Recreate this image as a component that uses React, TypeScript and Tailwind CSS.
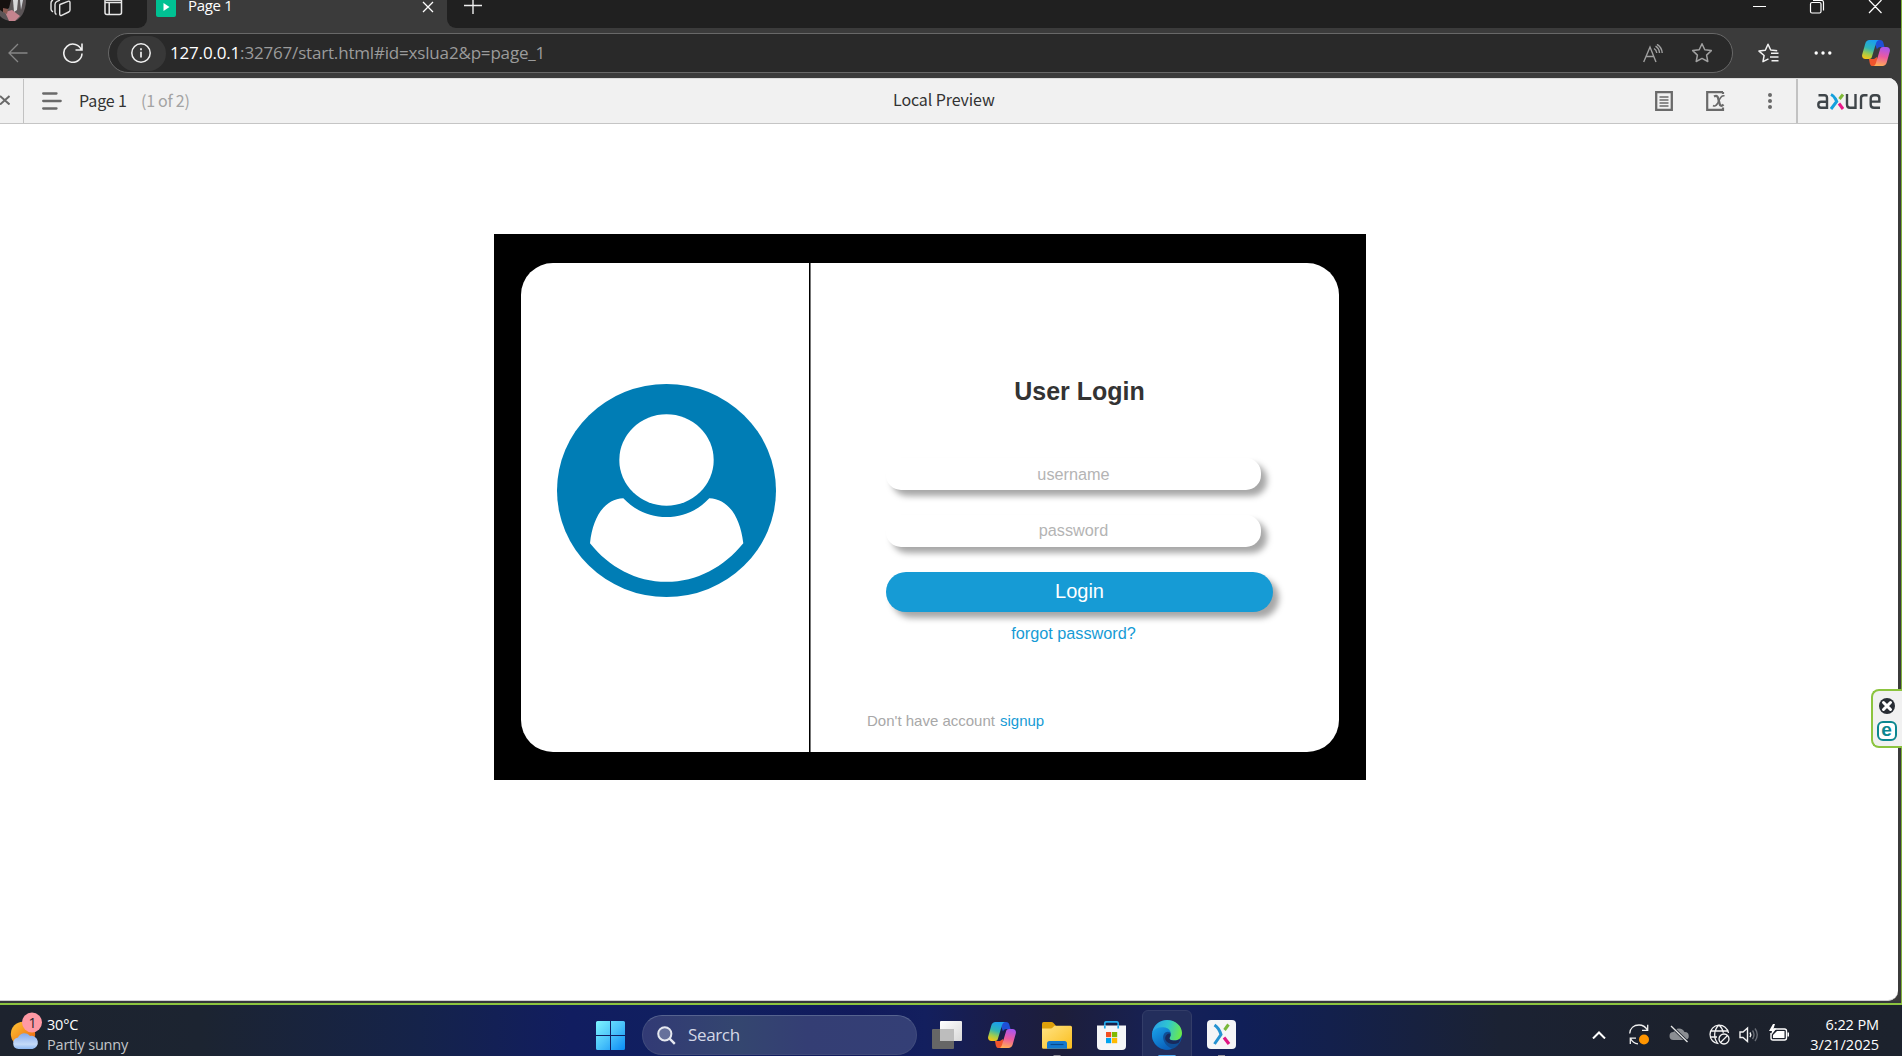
import React from "react";

const segoe = "font-['Open_Sans','Noto_Sans',sans-serif]";
const source = "font-['Noto_Sans_CJK_SC',sans-serif]";

function Copilot({ id, className }: { id: string; className: string }) {
  return (
    <svg viewBox="0 0 28 26" className={className} fill="none">
      <defs>
        <linearGradient id={id + "a"} x1="0.6" y1="0" x2="0.3" y2="1">
          <stop offset="0" stopColor="#1a9df0" />
          <stop offset="0.45" stopColor="#2fb5b5" />
          <stop offset="0.75" stopColor="#a3cc4b" />
          <stop offset="1" stopColor="#f5c518" />
        </linearGradient>
        <linearGradient id={id + "b"} x1="0.6" y1="0" x2="0.4" y2="1">
          <stop offset="0" stopColor="#a855f0" />
          <stop offset="0.5" stopColor="#ec5aa0" />
          <stop offset="1" stopColor="#ffae55" />
        </linearGradient>
      </defs>
      <path d="M14 0h4c2 0 2.800 1 3.300 2.600L22.500 7h-4c-2 0-3 1-3.500 2.500L13 4z" fill="#1f4fd6" />
      <path d="M7 19h5l3-2 1 5-1.500 4H11c-2 0-2.700-1-3.200-2.600z" fill="#f0552d" />
      <path d="M7.500 0H17c-1.800.3-2.500 1.700-3 3.300L10 16.500C9.500 18.300 8.500 19 7 19H3.500C.8 19-.4 17 .2 14.500L3.300 3.500C3.900 1.400 5.400 0 7.500 0z" fill={"url(#" + id + "a)"} />
      <path d="M20.500 26H11c1.800-.3 2.500-1.700 3-3.300L18 9.500C18.500 7.700 19.500 7 21 7h3.500c2.700 0 3.900 2 3.300 4.500l-3.100 11c-.6 2.100-2.100 3.500-4.200 3.500z" fill={"url(#" + id + "b)"} />
    </svg>
  );
}

function TitleBar() {
  return (
    <div className="flex h-[28px] items-start overflow-hidden bg-[#202020]">
      <div className="flex h-[28px] w-[147px] items-start rounded-br-[9px]">
        <svg viewBox="0 0 26 22" className="h-[22px] w-[26px]">
          <path d="M0 0h26a13 21 0 0 1-13 21Q4 21 0 16z" fill="#5b5557" />
          <path d="M0 0h11l-2 8-6 4-3-2z" fill="#15110f" />
          <path d="M13 0h5l-1 10-3 2z" fill="#d8d8da" />
          <path d="M20 0h3l-2 10z" fill="#cfd2d6" />
          <path d="M5 12l7-2 8 6-5 5H9z" fill="#c4848e" />
          <path d="M3 8l5 1-1 5-4-2z" fill="#8a5a50" />
        </svg>
        <svg viewBox="0 0 22 17" className="ml-[24px] h-[17px] w-[22px]" fill="none" stroke="#e4e4e4" strokeWidth="1.400">
          <path d="M10 4.500l8-3.200c1.200-.4 2 .2 2 1.200v7.500c0 1-.4 1.600-1.300 2l-7 3.300c-1.200.5-2 0-2-1.200V6c0-.8.100-1.200.3-1.500zM6.500 14.500C5.500 14 5 13.500 5 12.300V4.500C5 3 5.500 2 7 1.400L10 .2M3 11.800C1.500 11 1 10.500 1 9.300V3C1 1.500 1.500.6 3 0" />
        </svg>
        <svg viewBox="0 0 19 16" className="ml-[32px] h-[16px] w-[19px]" fill="none" stroke="#e8e8e8" strokeWidth="1.500">
          <path d="M1 -2V12.500a2 2 0 0 0 2 2H15.500a2 2 0 0 0 2-2V-2M1 2.500H17.500M5.200 2.500V14.500" />
          <path d="M1.500 0H17" strokeWidth="1.800" />
        </svg>
      </div>
      <div className="-ml-[9px] flex h-[28px] w-[9px] bg-[#3b3b3b]">
        <div className="h-[28px] w-[9px] rounded-br-[9px] bg-[#202020]" />
      </div>
      <div className="flex h-[28px] w-[300px] items-start bg-[#3b3b3b]">
        <svg viewBox="0 0 20 17" className="ml-[9px] h-[17px] w-[20px]">
          <path d="M0 0H20V15a2 2 0 0 1-2 2H2a2 2 0 0 1-2-2z" fill="#00c193" />
          <path d="M7.500 3v8l6-4z" fill="#fff" />
        </svg>
        <div className={segoe + " ml-[12px] w-[60px] whitespace-nowrap text-[15px] leading-[11px] tracking-[-0.300px] text-white"}>Page 1</div>
        <svg viewBox="0 0 12 12" className="ml-[174px] mt-[1px] h-[12px] w-[12px]" stroke="#fff" strokeWidth="1.300">
          <path d="M1 1l10 10M11 1L1 11" />
        </svg>
      </div>
      <div className="flex h-[28px] w-[9px] bg-[#3b3b3b]">
        <div className="h-[28px] w-[9px] rounded-bl-[9px] bg-[#202020]" />
      </div>
      <svg viewBox="0 0 18 15" className="ml-[8px] h-[15px] w-[18px]" stroke="#eee" strokeWidth="1.400">
        <path d="M0 5.500H18M9 -3V14" />
      </svg>
      <div className="flex-1" />
      <svg viewBox="0 0 129 14" className="mr-[19px] h-[14px] w-[129px]" fill="none" stroke="#fff" strokeWidth="1.200">
        <path d="M0 6.500H13M57.500 4a1.500 1.500 0 0 1 1.500-1.500h7.500A1.500 1.500 0 0 1 68 4v7.500a1.500 1.500 0 0 1-1.500 1.500H59a1.500 1.500 0 0 1-1.500-1.500zM60 .5h8.500A2 2 0 0 1 70.500 2.500V10.500M116 0l12.500 13M128.500 0L116 13" />
      </svg>
    </div>
  );
}

function AddressBar() {
  return (
    <div className="flex h-[50px] items-center bg-[#3b3b3b]">
      <svg viewBox="0 0 20 20" className="ml-[8px] h-[20px] w-[20px]" fill="none" stroke="#868686" strokeWidth="1.300">
        <path d="M19.500 10H1M10 1L1 10l9 9" />
      </svg>
      <svg viewBox="0 0 20 20" className="ml-[35px] h-[20px] w-[20px]" fill="none" stroke="#f0f0f0" strokeWidth="1.600">
        <path d="M18.600 7.500A9.100 9.100 0 1 0 19 10.500M19 .5V7H12.500" />
      </svg>
      <div className="ml-[25px] flex h-[40px] w-[1625px] items-center rounded-full border border-[#686868] bg-[#292929]">
        <div className="ml-[8px] flex h-[35px] w-[49px] items-center justify-center rounded-full bg-[#383838] pr-px">
          <svg viewBox="0 0 20 20" className="h-[20px] w-[20px]" fill="none" stroke="#f0f0f0" strokeWidth="1.500">
            <circle cx="10" cy="10" r="9.200" />
            <path d="M10 8.800V14.500M10 5.300V7.200" strokeWidth="1.700" />
          </svg>
        </div>
        <div className={segoe + " ml-[4px] w-[400px] whitespace-nowrap text-[17px] tracking-[-0.180px] text-[#9b9b9b]"}>
          <span className="text-white">127.0.0.1</span>:32767/start.html#id=xslua2&amp;p=page_1
        </div>
        <div className="flex-1" />
        <svg viewBox="0 0 20 19" className="h-[19px] w-[20px]" fill="none" stroke="#a0a0a0" strokeWidth="1.400">
          <path d="M.7 18L7 3l6 15M3 12.500h8M11 4.500c1.700 1 2.600 2.400 2.800 4.500M12.500 2.200c2.500 1.500 3.800 3.500 4 6.800M14 .3c3.200 2 5 4.500 5.200 8.700" />
        </svg>
        <svg viewBox="0 0 24 24" className="ml-[27px] mr-[18px] h-[24px] w-[24px]" fill="none" stroke="#a0a0a0" strokeWidth="1.500" strokeLinejoin="round">
          <path d="M12 2.800l2.800 5.900 6.500.9-4.700 4.500 1.200 6.400L12 17.400l-5.800 3.100 1.200-6.400L2.700 9.600l6.500-.9z" />
        </svg>
      </div>
      <svg viewBox="0 0 22 20" className="ml-[25px] h-[20px] w-[22px]" fill="none" stroke="#f2f2f2" strokeWidth="1.500" strokeLinejoin="round">
        <path d="M10.500 15.800L5 18.700l1.100-6.200L1 8.100l6.300-.9L10 1.200l2.700 5.800 6.500.8M13 10.200H20.500M12 14H20.500M13.500 17.700H20.500" />
      </svg>
      <svg viewBox="0 0 18 4" className="ml-[34px] h-[4px] w-[18px]" fill="#fff">
        <circle cx="2.200" cy="2" r="1.700" /><circle cx="9" cy="2" r="1.700" /><circle cx="15.800" cy="2" r="1.700" />
      </svg>
      <Copilot id="top" className="ml-[30px] h-[26px] w-[28px]" />
    </div>
  );
}

function AxureLogo() {
  return (
    <svg viewBox="0 0 64 17" className="h-[17px] w-[64px]" fill="none" stroke="#3f4549" strokeWidth="2.400">
      <path d="M1.500 2.200H7.500Q10 2.200 10 4.800V14.800H4Q1.300 14.800 1.300 11.800T4 8.800H10" />
      <path d="M14 1.500Q17 3 18.500 6L19.700 8.500 14 16" stroke="#14a0dc" strokeWidth="3" />
      <path d="M26 1.500L22.500 6" stroke="#7fb935" strokeWidth="3" />
      <path d="M22 10.500L26 16" stroke="#ea1688" strokeWidth="3" />
      <path d="M30 1V11.500Q30 14.800 33 14.800H38.500V1M44 16V5Q44 2.200 47 2.200H50.500M63 14.800H57Q53.700 14.800 53.700 11.500V5.500Q53.700 2.200 57 2.200H59.500Q62.300 2.200 62.300 5V8.600H54" />
    </svg>
  );
}

function PreviewBar() {
  return (
    <div className={source + " flex h-[46px] items-center border-b border-t border-b-[#c5c5c5] border-t-[#dcdcdc] bg-[#f1f1f1]"}>
      <div className="flex h-full w-[24px] items-center border-r border-[#c2c2c2]">
        <svg viewBox="0 0 10 10" className="mb-[2px] h-[10px] w-[10px]" stroke="#6a6a6a" strokeWidth="2"><path d="M0 1l9.500 8.500M9.500 1L0 9.500" /></svg>
      </div>
      <svg viewBox="0 0 20 18" className="ml-[18px] h-[18px] w-[20px]" stroke="#6a6a6a" strokeWidth="2.300" strokeLinecap="round">
        <path d="M1.200 1.500H14.500M1.200 9H18.700M1.200 16.500H14.500" />
      </svg>
      <div className="ml-[17px] w-[62px] whitespace-nowrap pb-[2px] text-[16px] leading-[24px] tracking-[-0.100px] text-[#333]">Page 1</div>
      <div className="w-[60px] whitespace-nowrap pb-[2px] text-[16px] leading-[24px] tracking-[-0.250px] text-[#a3a3a3]">(1 of 2)</div>
      <div className="ml-[692px] w-[120px] whitespace-nowrap pb-[4px] text-[16px] leading-[24px] tracking-[-0.100px] text-[#333]">Local Preview</div>
      <div className="flex-1" />
      <svg viewBox="0 0 18 20" className="h-[20px] w-[18px]" fill="none" stroke="#6a6a6a">
        <path d="M1.200 1.200H16.800V18.800H1.200z" strokeWidth="2.300" />
        <path d="M4.500 6H13.500M4.500 9H13.500M4.500 12H13.500M4.500 15H13.500" strokeWidth="1.700" />
      </svg>
      <svg viewBox="0 0 20 20" className="ml-[33px] h-[20px] w-[20px]" fill="none" stroke="#6a6a6a">
        <path d="M17 1.200H1.200V18.800H17V16.500M17 1V3" strokeWidth="2.200" />
        <path d="M8 5.500c3-1.500 4 0 4.500 3l1 4c.5 2.500 2 3 4 1" strokeWidth="2.400" />
        <path d="M18.500 5c-2-1-3.500.5-5 3.500l-2 4C10 15 8.500 15.500 7 14.500" strokeWidth="1.600" />
      </svg>
      <svg viewBox="0 0 4 16" className="ml-[42px] h-[16px] w-[4px]" fill="#6a6a6a">
        <circle cx="2" cy="2" r="2" /><circle cx="2" cy="8" r="2" /><circle cx="2" cy="14" r="2" />
      </svg>
      <div className="ml-[24px] flex h-full w-[102px] items-center border-l-2 border-[#c2c2c2] pl-[19px]"><AxureLogo /></div>
    </div>
  );
}

function LoginCard() {
  return (
    <div className="ml-[494px] h-[546px] w-[872px] bg-black px-[27px] pt-[29px]">
      <div className="flex h-[489px] w-[818px] overflow-hidden rounded-[32px] bg-white font-['Liberation_Sans',Arial,sans-serif]">
        <div className="w-[290px] border-r border-[#777] pl-[36px] pt-[121px] shadow-[inset_-1px_0_0_#000]">
          <svg viewBox="557 384 219 213" className="h-[213px] w-[219px]">
            <ellipse cx="666.500" cy="490.500" rx="109.500" ry="106.500" fill="#007db5" />
            <ellipse cx="666.500" cy="460" rx="47.200" ry="45.700" fill="#fff" />
            <path d="M623.300 498.200C605 499 593 516 590 543.200C609 567 636 581.800 666.500 581.800S724 567 743.300 543.200C740 516 728 499 709.300 498.200C697 511 683 517.100 666.500 517.100S636 511 623.300 498.200z" fill="#fff" />
          </svg>
        </div>
        <div className="flex flex-1 flex-col pl-[75px]">
          <h1 className="mt-[113px] h-[30px] w-[387px] text-center text-[25px] font-bold leading-[30px] text-[#333]">User Login</h1>
          <div className="mt-[52px] h-[32px] w-[375px] rounded-[15px] bg-white text-center text-[16.250px] leading-[32px] text-[#b4b4b4] shadow-[6px_6px_6px_rgba(0,0,0,0.350)]">username</div>
          <div className="mt-[25px] h-[32px] w-[375px] rounded-[15px] bg-white text-center text-[16.250px] leading-[31px] text-[#b4b4b4] shadow-[6px_6px_6px_rgba(0,0,0,0.350)]">password</div>
          <button className="mt-[25px] h-[40px] w-[387px] rounded-full bg-[#169bd5] pb-[2px] text-center text-[20px] leading-[36px] text-white shadow-[6px_6px_6px_rgba(0,0,0,0.350)]">Login</button>
          <a className="mt-[11px] h-[20px] w-[375px] text-center text-[16.250px] leading-[20px] text-[#169bd5]">forgot password?</a>
          <div className="-ml-[19px] mt-[68px] flex text-[15px] leading-[20px]">
            <span className="w-[133px] whitespace-nowrap text-[#a8a8a8]">Don't have account</span>
            <a className="text-[#169bd5]">signup</a>
          </div>
        </div>
      </div>
    </div>
  );
}

function SideWidget() {
  return (
    <div className="absolute right-0 top-[689px] flex h-[59px] w-[31px] flex-col items-center rounded-l-[8px] border-2 border-r-0 border-[#8cc43f] bg-[#f1f1f1] pr-[2px] pt-[7px]">
      <svg viewBox="0 0 16 16" className="h-[16px] w-[16px]">
        <circle cx="8" cy="8" r="8" fill="#282d34" />
        <path d="M4.500 4.500l7 7M11.500 4.500l-7 7" stroke="#fff" strokeWidth="3" strokeLinecap="round" />
      </svg>
      <div className="mt-[7px] flex h-[20px] w-[20px] items-center justify-center rounded-[6px] border-2 border-[#0b8790] bg-white pb-[3px] font-['Liberation_Sans',sans-serif] text-[19px] font-bold leading-none text-[#0b8790]">e</div>
    </div>
  );
}

function Taskbar() {
  return (
    <div className={segoe + " flex h-[51px] items-start overflow-hidden bg-[linear-gradient(90deg,#1d232e_0,#1c2431_200px,#15234a_420px,#111d60_570px,#102060_700px,#111a5c_860px,#131f5e_925px,#1b1d45_1010px,#1d1e3a_1060px,#162158_1170px,#101f58_1240px,#13204c_1330px,#1b2233_1500px,#1c212c_1700px,#1c222d_1902px)]"}>
      <svg viewBox="0 0 32 39" className="ml-[10px] mt-[7px] h-[39px] w-[32px]">
        <defs>
          <linearGradient id="sun" x1="0" y1="0" x2="1" y2="1"><stop stopColor="#ffc735" /><stop offset="1" stopColor="#ea5b0c" /></linearGradient>
          <linearGradient id="cloud" x1="0" y1="0" x2="0" y2="1"><stop stopColor="#84a9ed" /><stop offset="0.700" stopColor="#c4daf8" /><stop offset="1" stopColor="#8db8f3" /></linearGradient>
        </defs>
        <circle cx="13" cy="22" r="12.200" fill="url(#sun)" />
        <path d="M8.500 37a5.800 5.800 0 0 1-.5-11.500A7 7 0 0 1 20 24a6.500 6.500 0 0 1 2.500 13z" fill="url(#cloud)" />
        <circle cx="22" cy="10.500" r="10" fill="#ff99a4" />
        <text x="18.500" y="15.500" fontSize="14" fill="#26262c" fontFamily="Open Sans, sans-serif">1</text>
      </svg>
      <div className="ml-[5px] mt-[10px] w-[120px] whitespace-nowrap text-[14.500px] leading-[20px] tracking-[-0.200px]">
        <div className="text-white">30°C</div>
        <div className="text-[#c3c6ca]">Partly sunny</div>
      </div>
      <svg viewBox="0 0 29 29" className="ml-[429px] mt-[16px] h-[29px] w-[29px]">
        <defs><linearGradient id="win" gradientUnits="userSpaceOnUse" x1="0" y1="0" x2="29" y2="29"><stop stopColor="#7df4ff" /><stop offset="0.500" stopColor="#4cc4fa" /><stop offset="1" stopColor="#0a8cf5" /></linearGradient></defs>
        <path d="M0 1.500Q0 0 1.500 0H14V14H0zM15 0H27.500Q29 0 29 1.500V14H15zM0 15H14V29H1.500Q0 29 0 27.500zM15 15H29V27.500Q29 29 27.500 29H15z" fill="url(#win)" />
      </svg>
      <div className="ml-[17px] mt-[10px] flex h-[40px] w-[275px] items-center rounded-full border border-t-[#56638f] border-x-[#414c7d] border-b-[#414b78] bg-[linear-gradient(90deg,#323a75,#34466f_35%,#343e74_60%,#343f76)]">
        <svg viewBox="0 0 19 19" className="ml-[14px] h-[19px] w-[19px]" fill="none" stroke="#e6e8f0" strokeWidth="2">
          <circle cx="7.800" cy="7.800" r="6.600" fill="#66709b" /><path d="M12.600 12.600l5.200 5.200" strokeWidth="2.400" />
        </svg>
        <div className="ml-[12px] text-[17px] leading-[24px] tracking-[-0.350px] text-[#d3d7e6]">Search</div>
      </div>
      <svg viewBox="0 0 30 28" className="ml-[15px] mt-[16px] h-[28px] w-[30px]">
        <defs><linearGradient id="tv" x1="0" y1="0" x2="1" y2="1"><stop stopColor="#fff" /><stop offset="1" stopColor="#d8d8d8" /></linearGradient></defs>
        <rect x="8" width="22" height="20" rx="1" fill="url(#tv)" />
        <rect y="8" width="22" height="20" rx="1" fill="#666" />
        <path d="M8 8H22V20H8z" fill="#bdbdbd" />
      </svg>
      <Copilot id="task" className="ml-[26px] mt-[17px] h-[26px] w-[28px]" />
      <svg viewBox="0 0 30 34" className="ml-[26px] mt-[17px] h-[34px] w-[30px]">
        <defs><linearGradient id="fold" x1="0" y1="0" x2="1" y2="1"><stop stopColor="#ffe384" /><stop offset="1" stopColor="#fbbe1c" /></linearGradient></defs>
        <path d="M0 1.500Q0 0 1.500 0H9.500Q10.500 0 11.500 1L13.500 3.200V8H0z" fill="#dea00a" />
        <path d="M0 6.500H8.500Q10 6.500 11 5.200L12.500 3.800H28.500Q30 3.800 30 5.300V25.300Q30 26.800 28.500 26.800H1.500Q0 26.800 0 25.300z" fill="url(#fold)" />
        <path d="M5 26.800V21.500Q5 19 7.500 19H22.500Q25 19 25 21.500V26.800z" fill="#1479cf" />
        <path d="M8.500 22.500H21.500" stroke="#0b4a8c" strokeWidth="1.200" />
        <path d="M11.500 33H18.500V34H11.500z" fill="#8d8d98" />
      </svg>
      <svg viewBox="0 0 29 29" className="ml-[25px] mt-[16px] h-[29px] w-[29px]">
        <path d="M7.800 7V2.500Q7.800 .8 9.500 .8H19.500Q21.200 .8 21.200 2.500V7" fill="none" stroke="#21a8ea" strokeWidth="1.700" />
        <path d="M0 4.500H29V25Q29 29 25 29H4Q0 29 0 25z" fill="#f5f6f8" />
        <path d="M7.800 7.500V4.500M21.200 7.500V4.500" stroke="#21a8ea" strokeWidth="1.700" />
        <path d="M9 11h5.200v5.200H9z" fill="#f25022" /><path d="M15 11h5.200v5.200H15z" fill="#7fba00" />
        <path d="M9 17h5.200v5.200H9z" fill="#00a4ef" /><path d="M15 17h5.200v5.200H15z" fill="#ffb900" />
      </svg>
      <div className="ml-[16px] mt-[5px] flex h-[52px] w-[50px] flex-col items-center rounded-[6px] border border-[#333d68] bg-[#232e5c] pt-[9px]">
        <svg viewBox="0 0 30 30" className="h-[30px] w-[30px]">
          <defs>
            <linearGradient id="ea" x1="0" y1="0.300" x2="1" y2="0.500"><stop stopColor="#2a9fe8" /><stop offset="0.500" stopColor="#2fc6d0" /><stop offset="1" stopColor="#6bea4a" /></linearGradient>
            <linearGradient id="eb" x1="0" y1="0" x2="0.600" y2="1"><stop stopColor="#1aa4ea" /><stop offset="1" stopColor="#0a62bd" /></linearGradient>
          </defs>
          <circle cx="15" cy="15" r="15" fill="#0f4f97" />
          <path d="M0 13C2 7 8 6 13 7c3 1 6 3 6.500 7C18 11 13 11 11.500 15S13 26 20 28.800A15 15 0 0 1 0 13z" fill="url(#eb)" />
          <path d="M.3 12.500C1.500 5 7.500 0 15 0c8.500 0 15 6 15 13 0 5-4 7.500-7.500 7.500-4 0-5.500-1.500-5-2.800C20 15 19.500 9 13 7.500 8 6.500 3 8 .3 12.500z" fill="url(#ea)" />
          <path d="M17.500 17.700c-.5 1.300 1 2.800 5 2.800 2.700 0 4.500-.7 6-1.500-.4 1.500-1.200 2.800-2 4-5 2-11 1-13-3-1-3 1-6 3.500-6.500 1.500 0 2 2.500.5 4.200z" fill="#192a5c" />
        </svg>
        <div className="mt-[5px] h-[3px] w-[18px] shrink-0 rounded-full bg-[#53aef5]" />
      </div>
      <svg viewBox="0 0 29 36" className="ml-[15px] mt-[15px] h-[36px] w-[29px]">
        <rect width="29" height="29" rx="4" fill="#f4f5f7" />
        <path d="M7.500 5Q12 8 14 14.500L7.500 24" fill="none" stroke="#2492d1" strokeWidth="3" />
        <path d="M21.500 4.500L17.500 10" stroke="#78b83a" strokeWidth="3" />
        <path d="M17 17.500L22 24" stroke="#df1683" strokeWidth="3.200" />
        <path d="M11 35H18V36H11z" fill="#8d8d98" />
      </svg>
      <div className="flex-1" />
      <svg viewBox="0 0 14 8" className="mt-[26px] h-[8px] w-[14px]" fill="none" stroke="#fff" strokeWidth="2"><path d="M1 7.500l6-6 6 6" /></svg>
      <svg viewBox="0 0 20 21" className="ml-[23px] mt-[19px] h-[21px] w-[20px]" fill="none" stroke="#f0f0f0" strokeWidth="1.300">
        <path d="M.7 9.500C1 4 5 1 10 1c3.500 0 6.500 1.800 8.500 5M18.700 .8V6.300H13M1.300 20V14.200H7M1.500 14.500C3 17.500 5.500 19.500 9 19.800" />
        <circle cx="15" cy="15.500" r="5" fill="#ff9500" stroke="none" />
      </svg>
      <svg viewBox="0 0 20 18" className="ml-[20px] mt-[20px] h-[18px] w-[20px]">
        <path d="M4.500 15a4 4 0 0 1 0-8A6 6 0 0 1 15.500 7 4 4 0 0 1 16 15z" fill="#8b8e93" />
        <path d="M2 1l16.500 16" stroke="#1c222d" strokeWidth="3" /><path d="M2 1l16.500 16" stroke="#e8e8e8" strokeWidth="1.300" />
      </svg>
      <svg viewBox="0 0 21 21" className="ml-[20px] mt-[19px] h-[21px] w-[21px]" fill="none" stroke="#f4f4f4" strokeWidth="1.300">
        <path d="M9.500 19.700A9.300 9.300 0 1 1 19.500 9M1.500 7H18.800M1.500 13H8M8.500 19C4.500 14 4.500 6 10 1c2.700 2.500 4 5 4.300 7.800" />
        <circle cx="15" cy="15" r="5" /><path d="M11.500 18.500l7-7" />
      </svg>
      <svg viewBox="0 0 20 20" className="ml-[9px] mt-[20px] h-[20px] w-[20px]" fill="none" stroke="#f4f4f4" strokeWidth="1.400">
        <path d="M1 7H4L8.500 3V16.500L4 12.500H1zM11 7.500q1.500 2.300 0 4.600" />
        <path d="M13.500 5.500q3 4.200 0 8.500M16 3.500q4.500 6.200 0 12.500" stroke="#696d75" />
      </svg>
      <svg viewBox="0 0 21 18" className="ml-[10px] mt-[19px] h-[18px] w-[21px]">
        <path d="M5 5H15.500Q17.500 5 17.500 7V14Q17.500 16 15.500 16H4Q2 16 2 14V9" fill="none" stroke="#fff" strokeWidth="1.400" />
        <path d="M8 7H15.500V14H4V11z" fill="#fff" /><path d="M18.500 8.500H20V12.500H18.500zM4 0L0 7H3L2 11.500 7.500 4.500H4.500L6 0z" fill="#fff" />
      </svg>
      <div className="ml-[9px] mr-[23px] mt-[10px] w-[80px] whitespace-nowrap text-right text-[14.500px] leading-[20px] text-white">
        <div className="tracking-[-0.100px]">6:22 PM</div>
        <div>3/21/2025</div>
      </div>
    </div>
  );
}

export default function App() {
  return (
    <div className="relative flex h-[1056px] w-[1902px] flex-col overflow-hidden bg-[#3b3b3b]">
      <div className="border-r border-[#7fb03c]">
        <TitleBar />
        <AddressBar />
        <div className="mr-[3px] h-[923px] overflow-hidden rounded-br-[10px] rounded-tr-[10px] border-b border-[#d0d0d0] bg-white">
          <PreviewBar />
          <div className="pt-[110px]"><LoginCard /></div>
        </div>
        <div className="h-[2px] bg-[#35373b]" />
      </div>
      <div className="h-[2px] bg-[#8cc43f]" />
      <Taskbar />
      <SideWidget />
    </div>
  );
}
